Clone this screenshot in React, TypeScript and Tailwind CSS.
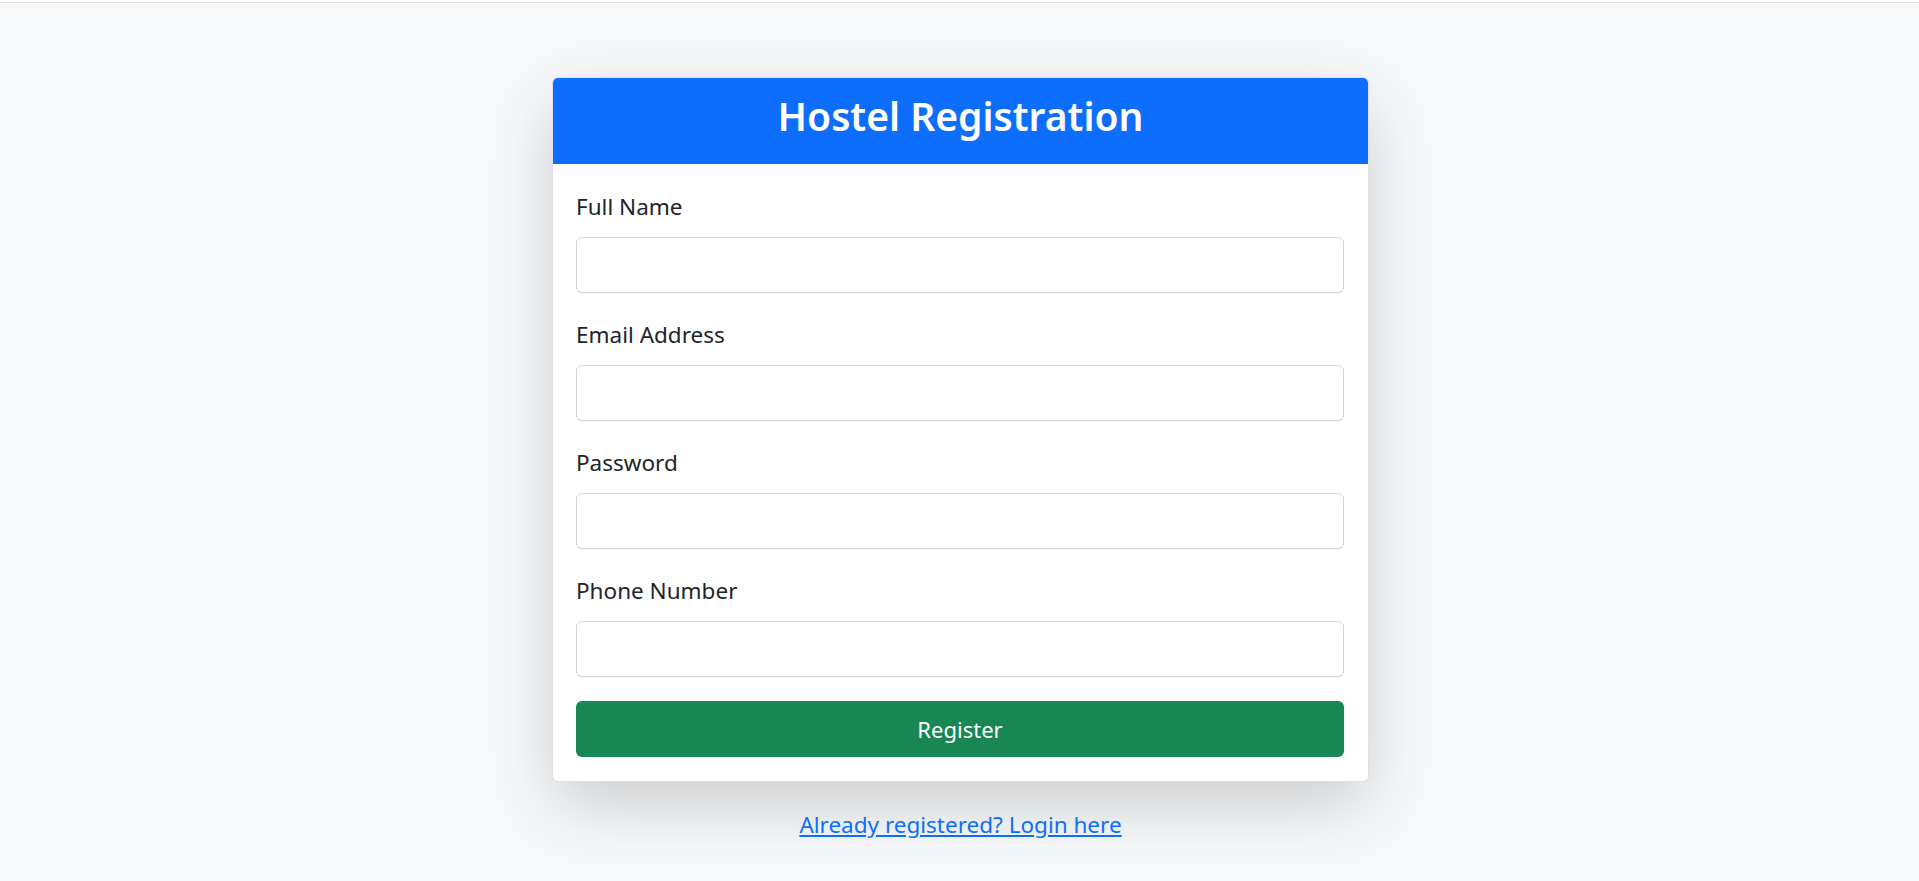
import React from 'react';

const fields = [
    { label: 'Full Name', type: 'text' },
    { label: 'Email Address', type: 'email' },
    { label: 'Password', type: 'password' },
    { label: 'Phone Number', type: 'tel' },
];

const App: React.FC = () => {
    return (
        <div className="min-h-screen bg-[#f8f9fa] font-['Noto_Sans',sans-serif] text-[#212529]">
            {/* Top strip */}
            <div className="h-[3px] bg-white border-b border-[#dedfe0]" />

            <div className="flex flex-col items-center pt-[74px] pl-[2px]">
                {/* Card */}
                <div className="w-[817px] bg-white border border-[rgba(0,0,0,0.12)] rounded-[6px] overflow-hidden shadow-[0_24px_72px_rgba(0,0,0,0.175)]">
                    <div className="h-[86px] bg-[#0d6efd] flex items-center justify-center">
                        <h3 className="text-white text-[39px] font-semibold leading-none pb-[12px]">Hostel Registration</h3>
                    </div>
                    <form className="pt-[25px] pb-[24px] pl-[23px] pr-[24px]" onSubmit={(e) => e.preventDefault()}>
                        {fields.map((f) => (
                            <div key={f.label} className="mb-[24px]">
                                <label className="block text-[22.5px] leading-[36px] mb-[12px]">{f.label}</label>
                                <input
                                    type={f.type}
                                    className="block w-full h-[56px] border border-[#ced4da] rounded-[6px] px-[18px] text-[22px] outline-none bg-white"
                                />
                            </div>
                        ))}
                        <button
                            type="submit"
                            className="w-full h-[56px] bg-[#198754] text-white text-[22px] rounded-[6px]"
                        >
                            Register
                        </button>
                    </form>
                </div>

                {/* Login link */}
                <a href="#" className="mt-[25px] text-[22.5px] leading-[36px] text-[#0d6efd] underline">
                    Already registered? Login here
                </a>
            </div>
        </div>
    );
};

export default App;
